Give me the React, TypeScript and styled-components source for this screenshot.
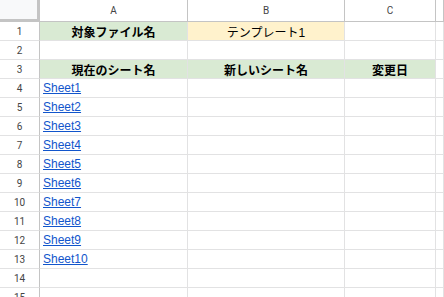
import React from "react";
import styled, { createGlobalStyle } from "styled-components";

const Global = createGlobalStyle`
  html, body { margin: 0; padding: 0; background: #fff; }
  body { overflow: hidden; }
`;

const Grid = styled.div`
  display: grid;
  grid-template-columns: 40px 148px 157px 91px 1fr;
  grid-auto-rows: 19px;
  grid-template-rows: 22px;
  width: 444px;
  height: 297px;
  overflow: hidden;
  font-family: "Liberation Sans", "Noto Sans CJK JP", Arial, sans-serif;
  font-size: 12px;
  color: #000;
`;

const Corner = styled.div`
  background: #f8f9fa;
  border-right: 3px solid #c4c4c4;
  border-bottom: 3px solid #c4c4c4;
`;

const ColHead = styled.div`
  display: flex;
  align-items: center;
  justify-content: center;
  background: #fff;
  border-right: 1px solid #c4c4c4;
  border-bottom: 1px solid #c4c4c4;
  font-family: Roboto, "Liberation Sans", sans-serif;
  font-size: 10px;
  color: #444;
`;

const RowHead = styled.div`
  display: flex;
  align-items: center;
  justify-content: center;
  background: #fff;
  border-right: 1px solid #c4c4c4;
  border-bottom: 1px solid #e2e2e3;
  font-family: Roboto, "Liberation Sans", sans-serif;
  font-size: 10px;
  color: #444;
`;

const Cell = styled.div<{ $bg?: string; $bold?: boolean; $center?: boolean }>`
  display: flex;
  align-items: center;
  justify-content: ${(p) => (p.$center ? "center" : "flex-start")};
  padding: 0 3px;
  background: ${(p) => p.$bg || "#fff"};
  border-right: 1px solid #e2e2e3;
  border-bottom: 1px solid #e2e2e3;
  font-weight: ${(p) => (p.$bold ? 700 : 400)};
  white-space: nowrap;
  overflow: hidden;
`;

const Link = styled.a`
  color: #1155cc;
  text-decoration: underline;
`;

const GREEN = "#d9ead3";
const YELLOW = "#fff2cc";

type C = { text?: string; bg?: string; bold?: boolean; center?: boolean; link?: boolean };

const rows: C[][] = [
  [{ text: "対象ファイル名", bg: GREEN, bold: true, center: true }, { text: "テンプレート1", bg: YELLOW, center: true }, {}, {}],
  [{}, {}, {}, {}],
  [
    { text: "現在のシート名", bg: GREEN, bold: true, center: true },
    { text: "新しいシート名", bg: GREEN, bold: true, center: true },
    { text: "変更日", bg: GREEN, bold: true, center: true },
    {},
  ],
  ...Array.from({ length: 10 }, (_, i) => [{ text: `Sheet${i + 1}`, link: true }, {}, {}, {}] as C[]),
  [{}, {}, {}, {}],
  [{}, {}, {}, {}],
];

export default function App() {
  return (
    <>
      <Global />
      <Grid>
        <Corner />
        <ColHead>A</ColHead>
        <ColHead>B</ColHead>
        <ColHead>C</ColHead>
        <ColHead />
        {rows.map((r, i) => (
          <React.Fragment key={i}>
            <RowHead>{i + 1}</RowHead>
            {r.map((c, j) => (
              <Cell key={j} $bg={c.bg} $bold={c.bold} $center={c.center}>
                {c.link ? <Link href="#">{c.text}</Link> : c.text}
              </Cell>
            ))}
          </React.Fragment>
        ))}
      </Grid>
    </>
  );
}
